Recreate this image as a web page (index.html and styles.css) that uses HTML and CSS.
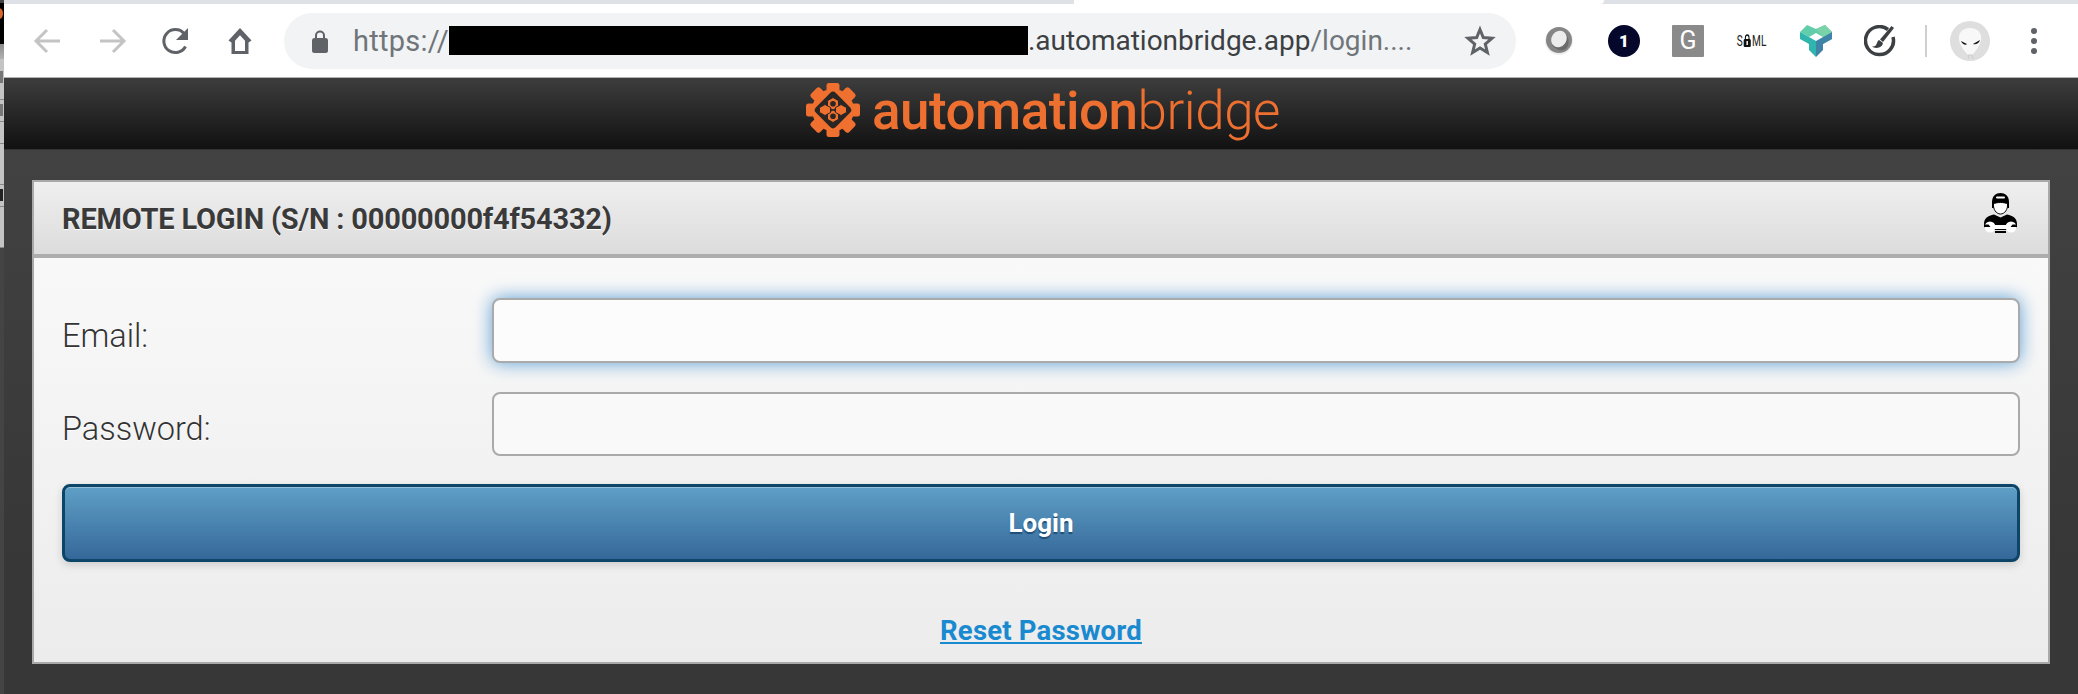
FILE: index.html
```html
<!DOCTYPE html>
<html lang="en">
<head>
<meta charset="utf-8">
<title>Remote Login</title>
<link rel="stylesheet" href="styles.css">
</head>
<body>
<aside class="strip">
  <div class="strip-top"><span class="strip-dot"></span></div>
  <div class="strip-mid"></div>
  <div class="strip-row"><span class="strip-mark"></span></div>
  <div class="strip-row short"><span class="strip-mark"></span></div>
  <div class="strip-row short"></div>
  <div class="strip-row"></div>
  <div class="strip-row short"><span class="strip-mark dark"></span></div>
  <div class="strip-row"></div>
  <div class="strip-rest"></div>
</aside>
<div class="main">
  <div class="tabstrip"><div class="tab"></div></div>
  <nav class="toolbar">
    <div class="slot first">
      <svg class="ico" viewBox="0 0 32 32"><path d="M28 16H5M15 5 4 16l11 11" fill="none" stroke="#c4c4c4" stroke-width="3"/></svg>
    </div>
    <div class="slot">
      <svg class="ico" viewBox="0 0 32 32"><path d="M4 16h23M17 5l11 11-11 11" fill="none" stroke="#c4c4c4" stroke-width="3"/></svg>
    </div>
    <div class="slot">
      <svg class="ico" viewBox="0 0 32 32"><path d="M25.5 21.5A11.5 11.5 0 1 1 24 8.5" fill="none" stroke="#5f6368" stroke-width="3"/><path d="M28 3v12H16z" fill="#5f6368"/></svg>
    </div>
    <div class="slot">
      <svg class="ico" viewBox="0 0 32 32"><path d="M16 3 4.500 15.500 7.500 17.500V29h17V17.500l3 -2zM11 15.800l5-5.500 5 5.500V26h-10z" fill="#5f6368" fill-rule="evenodd"/></svg>
    </div>
    <div class="omnibox">
      <svg class="lock" viewBox="0 0 16 24"><path d="M4 10V6.500a4 4 0 0 1 8 0V10" fill="none" stroke="#5f6368" stroke-width="2"/><rect y="9" width="16" height="15" rx="2.500" fill="#5f6368"/></svg>
      <span class="url-scheme">https://</span><span class="redact"></span><span class="url-dark">.automationbridge.app</span><span class="url-muted">/login....</span>
      <svg class="star" viewBox="0 0 32 32"><path d="M16 4.500 19.300 12.600 28 13.300 21.300 19 23.400 27.500 16 23 8.600 27.500 10.700 19 4 13.300 12.700 12.600z" fill="none" stroke="#5f6368" stroke-width="3" stroke-linejoin="miter"/></svg>
    </div>
    <div class="slot ext-first">
      <svg class="ico" viewBox="0 0 32 32"><circle cx="15" cy="16" r="14" fill="#eee"/><circle cx="15" cy="15" r="13" fill="#858585"/><path d="M8 20c2-6 7-11 13-12 5 4 5 14-1 17-4 1-9-1-12-5z" fill="#6a6a6a"/><ellipse cx="15" cy="14" rx="7.500" ry="8.500" transform="rotate(35 15 14)" fill="#ececec"/></svg>
    </div>
    <div class="slot">
      <div class="onepass">1</div>
    </div>
    <div class="slot">
      <div class="gbox">G</div>
    </div>
    <div class="slot">
      <div class="saml"><span>S</span><svg class="saml-lock" viewBox="0 0 10 13"><path d="M2.500 6V3.500a2.500 2.500 0 0 1 5 0V6" fill="none" stroke="#111" stroke-width="1.500"/><rect y="5" width="10" height="8" rx="1.500" fill="#111"/><rect x="4" y="7" width="2" height="4" fill="#fff"/></svg><span>ML</span></div>
    </div>
    <div class="slot">
      <svg class="ico-lg" viewBox="0 0 32 32"><path d="M0 7 7 0l9 4 9-4 7 7v7l-9 5v-7l-7-4-7 4z" fill="#62cdaa"/><path d="M0 7l9 5 7 4v16l-7-7v-6l-9-5z" fill="#2fb5ad"/><path d="M32 7v7l-9 5v6l-7 7V16z" fill="#3f84a8"/><path d="M16 4l9-4 7 7-9 5z" fill="#7ad2a8"/></svg>
    </div>
    <div class="slot">
      <svg class="ico-lg" viewBox="0 0 32 32"><path d="M24 4.500A14 14 0 1 0 29 12" fill="none" stroke="#3c4043" stroke-width="3.500"/><path d="M30 3 19 17l-3-2.500L27.500 1z" fill="#3c4043"/><path d="M15 15c-2 1-2 5-4 6-1 .5-3 .5-3 .5 2 2 8 2 10-1 1-1.500 1-2.500 .5-3z" fill="#3c4043"/></svg>
    </div>
    <div class="tool-sep"></div>
    <svg class="avatar" viewBox="0 0 40 40">
      <circle cx="20" cy="20" r="20" fill="#dedede"/>
      <path d="M20 7c-8 0-12 5-11 12 1 6 6 12 9 15h4c3-3 8-9 9-15 1-7-3-12-11-12z" fill="#f8f8f8"/>
      <path d="M11 20l6 3c-1 2-5 0-6-3zM30 19l-7 4c2 1 6 0 7-4z" fill="#151515"/>
      <path d="M19 38l-1-4h4l1 4" fill="none" stroke="#ccc"/>
    </svg>
    <div class="slot dots-slot"><span class="menu-dot"></span><span class="menu-dot"></span><span class="menu-dot"></span></div>
  </nav>
  <header class="brandbar">
    <svg class="gear" viewBox="0 0 54 54">
      <g fill="#f07030">
        <circle cx="27" cy="27" r="21"/>
        <rect x="20.500" y="0" width="13" height="54" rx="2.500"/>
        <rect x="20.500" y="0" width="13" height="54" rx="2.500" transform="rotate(45 27 27)"/>
        <rect x="20.500" y="0" width="13" height="54" rx="2.500" transform="rotate(90 27 27)"/>
        <rect x="20.500" y="0" width="13" height="54" rx="2.500" transform="rotate(135 27 27)"/>
      </g>
      <rect x="13" y="13" width="28" height="28" rx="4" transform="rotate(45 27 27)" fill="#2a2623"/>
      <g fill="#f07030" stroke="#2a2623" stroke-width="1">
        <path d="M27 14.500l5.500 3.200v6.200L27 27l-5.500-3.100v-6.200z"/>
        <path d="M27 27l5.500 3.100v6.200L27 39.500l-5.500-3.200v-6.200z"/>
        <path d="M19 21.500l5.500 3v5l-5.500 3-5.500-3v-5z"/>
        <path d="M35 21.500l5.500 3v5l-5.500 3-5.500-3v-5z"/>
      </g>
      <circle cx="27" cy="20.800" r="2.800" fill="#2a2623"/>
      <circle cx="27" cy="33.200" r="2.800" fill="#2a2623"/>
    </svg>
    <div class="wordmark"><span class="wm-strong">automation</span><span class="wm-light">bridge</span></div>
  </header>
  <main class="content">
    <section class="panel">
      <div class="panel-head">
        <h1 class="panel-title">REMOTE LOGIN (S/N : 00000000f4f54332)</h1>
        <svg class="mechanic" viewBox="0 0 33 40">
          <path d="M8 9C8 3 12 0 16.500 0S25 3 25 9v6H8z" fill="#000"/>
          <rect x="12" y="3.500" width="9" height="2" rx="1" fill="#fff"/>
          <path d="M9.500 11c2-2 12-2 14 0 .5 5-2.500 10-7 10s-7.500-5-7-10z" fill="#fff" stroke="#000" stroke-width="1"/>
          <path d="M0 31c0-6 4-8 10-9.500l6.500 3 6.500-3C29 23 33 25 33 31c0 3-1 5-3 6H3c-2-1-3-3-3-6z" fill="#000"/>
          <circle cx="6" cy="34" r="5.500" fill="#fff"/>
          <circle cx="27" cy="34" r="5.500" fill="#fff"/>
          <rect x="6" y="32" width="21" height="4" fill="#fff"/>
          <path d="M0 34h6.500l-2-2.500H0zM33 34h-6.500l2-2.500H33z" fill="#000"/>
          <rect x="11" y="38" width="11" height="2" fill="#000"/>
        </svg>
      </div>
      <form class="panel-body">
        <div class="field">
          <label class="field-label" for="email">Email:</label>
          <input class="field-input focused" id="email" type="text">
        </div>
        <div class="field second">
          <label class="field-label" for="password">Password:</label>
          <input class="field-input" id="password" type="password">
        </div>
        <button class="login-btn" type="button">Login</button>
        <div class="reset"><a class="reset-link" href="#">Reset Password</a></div>
      </form>
    </section>
  </main>
</div>
</body>
</html>
```
FILE: styles.css
```css
* { box-sizing: border-box; }
html, body { margin: 0; height: 694px; overflow: hidden; }
body { display: flex; background: #3a3a3a; font-family: "Roboto", "Liberation Sans", sans-serif; }

.strip { width: 4px; height: 694px; flex: none; display: flex; flex-direction: column; background: #444; overflow: hidden; }
.strip-top { height: 41px; margin-top: 3px; flex: none; background: #000; position: relative; overflow: hidden; }
.strip-dot { position: absolute; left: -5px; top: 5px; width: 8px; height: 11px; border-radius: 50%; background: #d8652a; }
.strip-mid { height: 15px; flex: none; background: linear-gradient(#8c8c8c, #b0b0b0); }
.strip-row { height: 41px; flex: none; padding-top: 12px; background: #c4c4c4; border-bottom: 1px solid #888; }
.strip-row.short { height: 22px; padding-top: 4px; }
.strip-mark { display: block; width: 3px; height: 12px; background: #777; }
.strip-mark.dark { background: #222; }
.strip-rest { flex: 1; background: #444; }

.main { flex: 1; min-width: 0; height: 694px; display: flex; flex-direction: column; background: linear-gradient(#464646, #373737 80%); }

.tabstrip { height: 4px; flex: none; background: #dee1e6; display: flex; justify-content: flex-end; padding-right: 474px; }
.tab { width: 530px; background: #fff; border-bottom-right-radius: 6px; }

.toolbar { height: 74px; flex: none; background: #fff; border-bottom: 1px solid #b4b4b4; display: flex; align-items: center; }
.slot { width: 64px; height: 56px; flex: none; display: flex; align-items: center; justify-content: center; }
.slot.first { margin-left: 12px; }
.ico { width: 32px; height: 32px; display: block; }
.ico-lg { width: 32px; height: 32px; display: block; }

.omnibox { width: 1232px; height: 56px; margin-left: 12px; flex: none; border-radius: 28px; background: #f1f3f4; display: flex; align-items: center; padding-left: 28px; font-size: 28px; white-space: nowrap; }
.lock { width: 16px; height: 24px; margin-right: 25px; flex: none; }
.url-scheme { color: #70757a; font-size: 29px; letter-spacing: .25px; }
.url-muted { color: #70757a; }
.url-dark { color: #3c4043; }
.redact { width: 579px; height: 29px; background: #000; flex: none; }
.star { width: 32px; height: 32px; margin-left: auto; margin-right: 20px; flex: none; }
.ext-first { margin-left: 12px; }

.onepass { width: 32px; height: 32px; border-radius: 50%; background: #05082b; color: #fff; font-size: 17px; font-weight: 900; line-height: 32px; text-align: center; }
.gbox { width: 32px; height: 32px; background: #8a8a8a; color: #fff; font-size: 25px; line-height: 32px; text-align: center; border-radius: 1px; }
.saml { display: flex; align-items: center; gap: 1px; font-size: 14px; line-height: 14px; color: #222; transform: scaleX(.72); }
.saml-lock { width: 11px; height: 13px; display: block; }

.tool-sep { width: 2px; height: 32px; margin-left: 13px; background: #cfcfcf; flex: none; }
.avatar { width: 40px; height: 40px; margin-left: 23px; flex: none; display: block; }
.dots-slot { margin-left: 12px; flex-direction: column; gap: 4px; }
.menu-dot { width: 6px; height: 6px; border-radius: 50%; background: #5f6368; }

.brandbar { height: 72px; flex: none; background: linear-gradient(#3d3d3d, #111); border-bottom: 1px solid #333; display: flex; align-items: center; justify-content: center; padding-left: 4px; }
.gear { width: 54px; height: 54px; flex: none; margin-bottom: 8px; }
.wordmark { margin-left: 12px; margin-bottom: 6px; font-size: 53px; line-height: 60px; letter-spacing: -.5px; color: #ed7031; white-space: nowrap; }
.wm-strong { font-weight: 500; }
.wm-light { font-weight: 300; }

.content { flex: 1; padding: 30px 28px 0; }
.panel { height: 484px; border: 2px solid #a9a9a9; display: flex; flex-direction: column; background: linear-gradient(#fbfbfb, #ececec); }
.panel-head { height: 76px; flex: none; border-bottom: 4px solid #adadad; background: linear-gradient(#efefef, #dcdcdc); display: flex; justify-content: space-between; align-items: flex-start; padding: 0 31px 0 28px; }
.panel-title { margin: 0; font-size: 29px; line-height: 75px; font-weight: 700; color: #3a3a3a; text-shadow: 0 1px 0 #fff; letter-spacing: -.2px; white-space: nowrap; }
.mechanic { width: 33px; height: 40px; margin-top: 11px; flex: none; display: block; }

.panel-body { flex: 1; padding: 40px 28px 0; display: flex; flex-direction: column; }
.field { display: grid; grid-template-columns: 430px 1fr; align-items: center; }
.field.second { margin-top: 29px; }
.field-label { padding-top: 10px; font-size: 32.500px; line-height: 40px; font-weight: 300; color: #333; text-shadow: 0 1px 0 #fff; }
.field-input { width: 100%; height: 65px; padding: 0 16px; border: 2px solid #aaa; border-radius: 8px; background: #f9f9f9; outline: none; font-size: 24px; display: block; }
.field.second .field-input { height: 64px; }
.field-input.focused { background: #fcfcfc; box-shadow: 0 0 18px #5d9fd6; }

.login-btn { height: 78px; margin-top: 28px; flex: none; border: 3px solid #0c4568; border-radius: 8px; background: linear-gradient(#5f9fc6, #35689a); box-shadow: inset 0 1px 0 rgba(255,255,255,.35), 0 3px 8px rgba(0,0,0,.15); color: #fff; font-family: inherit; font-size: 26px; font-weight: 700; text-shadow: 0 2px 1px #1d4f78; }

.reset { margin-top: 51px; text-align: center; line-height: 36px; }
.reset-link { color: #1a8ad0; font-size: 27.500px; font-weight: 700; letter-spacing: .2px; text-decoration: underline; }
```
